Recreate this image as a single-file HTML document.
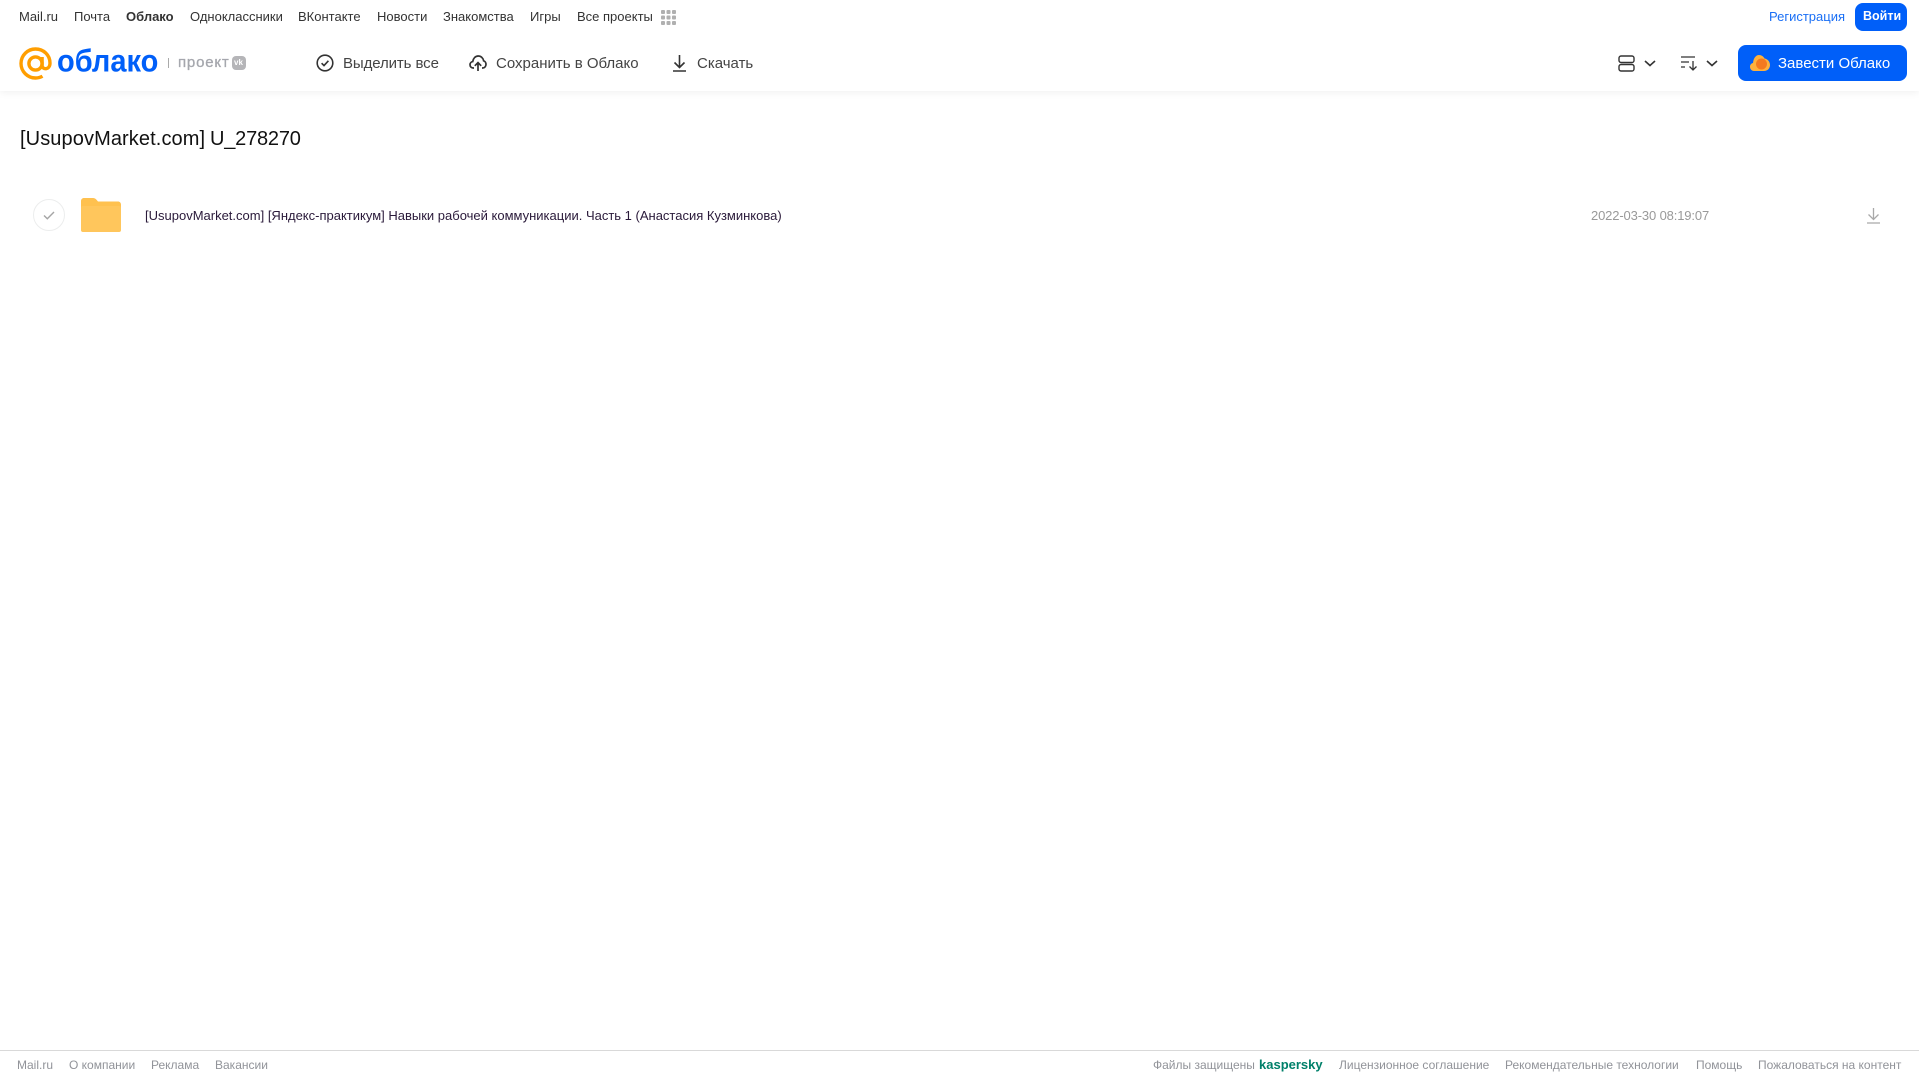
<!DOCTYPE html>
<html lang="ru"><head><meta charset="utf-8"><title>Облако</title>
<style>
html,body{margin:0;padding:0;background:#fff;overflow:hidden}
body{width:1919px;height:1079px;position:relative;font-family:"Liberation Sans",sans-serif}
span,svg,div{position:absolute;white-space:nowrap}
.n{top:8px;line-height:17px;font-size:13px;color:#333}
.a{top:54px;line-height:20px;font-size:15px;color:#444;letter-spacing:-.1px}
.f{top:1057px;line-height:16px;font-size:12px;color:#919399}
</style></head><body>
<div style="left:0;top:0;width:1919px;height:91px;background:#fff;box-shadow:0 1px 8px rgba(0,0,0,.07)"></div>
<span class="n" style="left:19px">Mail.ru</span>
<span class="n" style="left:74px">Почта</span>
<span class="n" style="left:126px;font-weight:bold">Облако</span>
<span class="n" style="left:190px">Одноклассники</span>
<span class="n" style="left:298px">ВКонтакте</span>
<span class="n" style="left:377px">Новости</span>
<span class="n" style="left:443px">Знакомства</span>
<span class="n" style="left:530px">Игры</span>
<span class="n" style="left:577px">Все проекты</span>
<svg style="left:661px;top:10px" width="15" height="15" fill="#b0b0b0"><rect x="0" y="0" width="4" height="4" rx="1"/><rect x="5.5" y="0" width="4" height="4" rx="1"/><rect x="11" y="0" width="4" height="4" rx="1"/><rect x="0" y="5.5" width="4" height="4" rx="1"/><rect x="5.5" y="5.5" width="4" height="4" rx="1"/><rect x="11" y="5.5" width="4" height="4" rx="1"/><rect x="0" y="11" width="4" height="4" rx="1"/><rect x="5.5" y="11" width="4" height="4" rx="1"/><rect x="11" y="11" width="4" height="4" rx="1"/></svg>
<span style="left:1769px;top:8px;line-height:17px;font-size:13px;color:#1a6ff5">Регистрация</span>
<div style="left:1855px;top:3px;width:52px;height:28px;border-radius:8px;background:#005ff9"></div>
<span style="left:1863px;top:8px;line-height:17px;font-size:12.500px;font-weight:bold;color:#fff">Войти</span>

<svg style="left:19px;top:47px" width="33" height="33" viewBox="0 0 33 33" fill="none" stroke="#ff9e00" stroke-width="3.4"><circle cx="16.5" cy="16.5" r="6.6"/><path d="M23.1 10v8.500c0 4.600 7.900 4.600 7.900-2.400C31 8 24.500 2 16.500 2S2 8.500 2 16.500 8.500 31 16.500 31c2.800 0 5-.6 7-1.800"/></svg>
<span style="left:57px;top:42px;line-height:40px;font-size:29px;font-weight:bold;color:#005ff9;transform-origin:0 50%;transform:scaleY(1.08)">облако</span>
<div style="left:168px;top:58px;width:1px;height:10px;background:#aaa"></div>
<span style="left:178px;top:53px;line-height:20px;font-size:15px;color:#a5a7ad;letter-spacing:.8px;-webkit-text-stroke:.3px #a5a7ad">проект</span>
<div style="left:232px;top:56px;width:14px;height:14px;border-radius:4px;background:#b5b5b8"></div>
<span style="left:234px;top:57px;line-height:12px;font-size:8px;font-weight:bold;color:#fff">vk</span>

<svg style="left:316px;top:54px" width="18" height="18" viewBox="0 0 18 18" fill="none" stroke="#333" stroke-width="1.6"><circle cx="9" cy="9" r="7.8"/><path d="M5.6 9.2l2.4 2.4 4.4-4.8"/></svg>
<span class="a" style="left:343px">Выделить все</span>
<svg style="left:469px;top:54px" width="18" height="18" viewBox="0 0 18 18" fill="none" stroke="#333" stroke-width="1.7"><path d="M5 14H4.200C2.300 14 1 12.500 1 10.800c0-1.600 1.100-2.900 2.700-3.200C4.200 4.300 6.400 2 9.200 2c2.800 0 5 2 5.400 4.800 1.400.4 2.400 1.900 2.400 3.500 0 2-1.400 3.700-3.400 3.700H13M9 17V9M5.800 11.800L9 8.600l3.200 3.200"/></svg>
<span class="a" style="left:496px;letter-spacing:0">Сохранить в Облако</span>
<svg style="left:672px;top:54px" width="15" height="18" viewBox="0 0 15 18" fill="none" stroke="#333" stroke-width="1.6"><path d="M7.500 1v12M2.500 8.500l5 5 5-5M1 17h13"/></svg>
<span class="a" style="left:697px;letter-spacing:0">Скачать</span>

<svg style="left:1618px;top:55px" width="17" height="17" viewBox="0 0 17 17" fill="none" stroke="#333" stroke-width="1.4"><rect x="1" y="1" width="15" height="6.500" rx="2"/><rect x="1" y="9.500" width="15" height="6.500" rx="2"/></svg>
<svg style="left:1644px;top:60px" width="12" height="7" viewBox="0 0 12 7" fill="none" stroke="#333" stroke-width="1.6"><path d="M1 1l5 4.500L11 1"/></svg>
<svg style="left:1681px;top:56px" width="17" height="15" viewBox="0 0 17 15" fill="none" stroke="#333" stroke-width="1.3"><path d="M0 1h14M0 6h8M0 11h4M12 5v9M8.500 10.500L12 14l3.500-3.500"/></svg>
<svg style="left:1706px;top:60px" width="12" height="7" viewBox="0 0 12 7" fill="none" stroke="#333" stroke-width="1.6"><path d="M1 1l5 4.500L11 1"/></svg>
<div style="left:1738px;top:45px;width:169px;height:36px;border-radius:8px;background:#005ff9"></div>
<svg style="left:1750px;top:54px" width="20" height="18" viewBox="0 0 20 18"><path d="M4 17C1.500 17 0 15 0 12.800 0 10.800 1.300 9.300 3 9 3.500 4 6 1 9 1c2.500 0 4.500 1.500 5.500 3.500C17.500 5 20 7.500 20 11c0 3.500-2.500 6-6 6z" fill="#ffb13c"/><circle cx="11.500" cy="10" r="5.500" fill="#f47a20"/></svg>
<span style="left:1778px;top:54px;line-height:20px;font-size:15px;color:#fff">Завести Облако</span>

<span style="left:20px;top:126px;line-height:26px;font-size:20px;color:#111;letter-spacing:.1px">[UsupovMarket.com]</span>
<span style="left:210px;top:126px;line-height:26px;font-size:20px;color:#111;letter-spacing:-.2px">U_278270</span>

<div style="left:33px;top:199px;width:30px;height:30px;border:1px solid #eceded;border-radius:50%"></div>
<svg style="left:43px;top:211px" width="12" height="9" viewBox="0 0 12 9" fill="none" stroke="#a5a5a5" stroke-width="1.4"><path d="M1 4.500l3.300 3.300L11 1"/></svg>
<svg style="left:81px;top:198px" width="40" height="34" viewBox="0 0 40 34"><path d="M0 3C0 1.300 1.300 0 3 0h9c1.500 0 2.500.6 3.500 1.800L17 3.500h20c1.700 0 3 1.300 3 3V31c0 1.700-1.300 3-3 3H3c-1.700 0-3-1.300-3-3z" fill="#ffc14f"/><rect x="0" y="8" width="40" height="26" rx="2" fill="#ffc65c"/></svg>
<span style="left:145px;top:208px;line-height:16px;font-size:13px;color:#2a1a3a">[UsupovMarket.com] [Яндекс-практикум] Навыки рабочей коммуникации. Часть 1 (Анастасия Кузминкова)</span>
<span style="left:1591px;top:208px;line-height:16px;font-size:13px;color:#999;letter-spacing:-.14px">2022-03-30 08:19:07</span>
<svg style="left:1867px;top:207px" width="13" height="17" viewBox="0 0 13 17" fill="none" stroke="#a9a9a9" stroke-width="1.3"><path d="M6.500 1v11M1.500 7.500l5 5 5-5M0 16h13"/></svg>

<div style="left:0;top:1050px;width:1919px;height:1px;background:#d9d9d9"></div>
<span class="f" style="left:17px">Mail.ru</span>
<span class="f" style="left:69px">О компании</span>
<span class="f" style="left:151px">Реклама</span>
<span class="f" style="left:215px">Вакансии</span>
<span class="f" style="left:1153px">Файлы защищены</span>
<span class="f" style="left:1259px;font-size:13px;font-weight:bold;color:#00806a">kaspersky</span>
<span class="f" style="left:1339px">Лицензионное соглашение</span>
<span class="f" style="left:1505px">Рекомендательные технологии</span>
<span class="f" style="left:1696px">Помощь</span>
<span class="f" style="left:1758px">Пожаловаться на контент</span>
</body></html>
